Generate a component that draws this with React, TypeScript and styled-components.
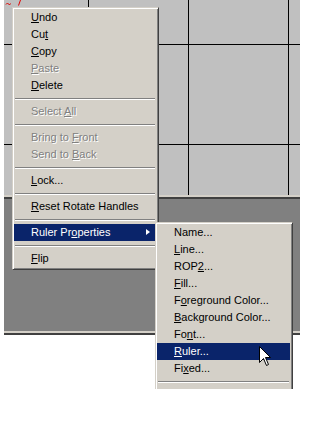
import styled, { createGlobalStyle } from "styled-components";

const GlobalStyle = createGlobalStyle`
  html, body {
    margin: 0;
    padding: 0;
    background: #fff;
  }
`;

type Entry =
  | { kind: "item"; label: string; mnemonic?: number; disabled?: boolean; active?: boolean; submenu?: boolean }
  | { kind: "sep" };

const mainItems: Entry[] = [
  { kind: "item", label: "Undo", mnemonic: 0 },
  { kind: "item", label: "Cut", mnemonic: 2 },
  { kind: "item", label: "Copy", mnemonic: 0 },
  { kind: "item", label: "Paste", mnemonic: 0, disabled: true },
  { kind: "item", label: "Delete", mnemonic: 0 },
  { kind: "sep" },
  { kind: "item", label: "Select All", mnemonic: 7, disabled: true },
  { kind: "sep" },
  { kind: "item", label: "Bring to Front", mnemonic: 9, disabled: true },
  { kind: "item", label: "Send to Back", mnemonic: 8, disabled: true },
  { kind: "sep" },
  { kind: "item", label: "Lock...", mnemonic: 0 },
  { kind: "sep" },
  { kind: "item", label: "Reset Rotate Handles", mnemonic: 0 },
  { kind: "sep" },
  { kind: "item", label: "Ruler Properties", mnemonic: 8, active: true, submenu: true },
  { kind: "sep" },
  { kind: "item", label: "Flip", mnemonic: 0 },
];

const subItems: Entry[] = [
  { kind: "item", label: "Name..." },
  { kind: "item", label: "Line...", mnemonic: 0 },
  { kind: "item", label: "ROP2...", mnemonic: 3 },
  { kind: "item", label: "Fill...", mnemonic: 0 },
  { kind: "item", label: "Foreground Color...", mnemonic: 1 },
  { kind: "item", label: "Background Color...", mnemonic: 0 },
  { kind: "item", label: "Font...", mnemonic: 2 },
  { kind: "item", label: "Ruler...", mnemonic: 0, active: true },
  { kind: "item", label: "Fixed...", mnemonic: 2 },
  { kind: "sep" },
  { kind: "item", label: "Default Properties..." },
];

const renderLabel = (label: string, mnemonic?: number) => {
  if (mnemonic === undefined) return label;
  return (
    <>
      {label.slice(0, mnemonic)}
      <u>{label[mnemonic]}</u>
      {label.slice(mnemonic + 1)}
    </>
  );
};

const MenuList = ({ items }: { items: Entry[] }) => (
  <>
    {items.map((entry, i) =>
      entry.kind === "sep" ? (
        <Separator key={i} />
      ) : (
        <Item key={i} $active={entry.active} $disabled={entry.disabled}>
          <span>{renderLabel(entry.label, entry.mnemonic)}</span>
          {entry.submenu && <Arrow $active={entry.active} />}
        </Item>
      )
    )}
  </>
);

const Cursor = () => (
  <CursorBox width="13" height="22" viewBox="0 0 13 22">
    <path
      d="M0.5 0.5 L0.5 16.5 L4.5 12.5 L7.5 19.5 L9.5 18.5 L6.5 11.5 L11.5 11.5 Z"
      fill="#fff"
      stroke="#000"
      strokeWidth="1"
    />
  </CursorBox>
);

export default function App() {
  return (
    <Page>
      <GlobalStyle />
      <Scene>
        <Canvas>
          <GridArea>
            <Squiggle width="18" height="7" viewBox="0 0 18 7">
              <polyline points="1,4.5 2.5,3 4.5,5 5.5,3.5" fill="none" stroke="#e00000" strokeWidth="1" />
              <polyline points="15.5,0 13.5,5.5" fill="none" stroke="#e00000" strokeWidth="1" />
            </Squiggle>
          </GridArea>
          <DarkArea />
        </Canvas>

        <Menu $left={12} $top={7} $width={147}>
          <MenuList items={mainItems} />
        </Menu>
        <Menu $left={155} $top={222} $width={138}>
          <MenuList items={subItems} />
        </Menu>
        <Cursor />
      </Scene>
    </Page>
  );
}

const Page = styled.div`
  width: 325px;
  height: 425px;
  background: #fff;
  font-family: Tahoma, "Liberation Sans", Arial, sans-serif;
  font-size: 11px;
`;

const Scene = styled.div`
  position: relative;
  height: 389px;
  overflow: hidden;
`;

const Canvas = styled.div`
  margin-left: 4px;
  width: 296px;
  display: flex;
  flex-direction: column;
`;

const GridArea = styled.div`
  position: relative;
  height: 195px;
  background-color: #c0c0c0;
  background-image: linear-gradient(to right, #000 0 1px, transparent 1px),
    linear-gradient(to bottom, #000 0 1px, transparent 1px);
  background-size: 100px 100px;
  background-position: 84px 44px;
  border-bottom: 2px solid #d4d0c8;
`;

const DarkArea = styled.div`
  height: 132px;
  background: #808080;
  border-top: 2px solid #404040;
  border-bottom: 2px solid #d4d0c8;
  box-shadow: 0 2px 0 #404040;
`;

const Squiggle = styled.svg`
  position: absolute;
  left: 1px;
  top: 0;
`;

const Menu = styled.div<{ $left: number; $top: number; $width: number }>`
  position: absolute;
  left: ${(p) => p.$left}px;
  top: ${(p) => p.$top}px;
  width: ${(p) => p.$width}px;
  box-sizing: border-box;
  background: #d4d0c8;
  border: 1px solid;
  border-color: #d4d0c8 #404040 #404040 #d4d0c8;
  box-shadow: inset 1px 1px #fff, inset -1px -1px #808080;
  padding: 1px 2px 2px 1px;
  display: flex;
  flex-direction: column;
`;

const Item = styled.div<{ $active?: boolean; $disabled?: boolean }>`
  position: relative;
  height: 17px;
  line-height: 17px;
  padding-left: 17px;
  white-space: nowrap;
  background: ${(p) => (p.$active ? "#0a246a" : "transparent")};
  color: ${(p) => (p.$active ? "#fff" : p.$disabled ? "#808080" : "#000")};
  text-shadow: ${(p) => (p.$disabled ? "1px 1px 0 #fff" : "none")};
`;

const Arrow = styled.span<{ $active?: boolean }>`
  position: absolute;
  right: 6px;
  top: 5px;
  width: 0;
  height: 0;
  border-top: 3.5px solid transparent;
  border-bottom: 3.5px solid transparent;
  border-left: 4px solid ${(p) => (p.$active ? "#fff" : "#000")};
`;

const Separator = styled.div`
  height: 9px;
  display: flex;
  align-items: center;
  padding: 0 1px;

  &::before {
    content: "";
    flex: 1;
    height: 1px;
    background: #808080;
    border-bottom: 1px solid #fff;
  }
`;

const CursorBox = styled.svg`
  position: absolute;
  left: 259px;
  top: 346px;
`;
